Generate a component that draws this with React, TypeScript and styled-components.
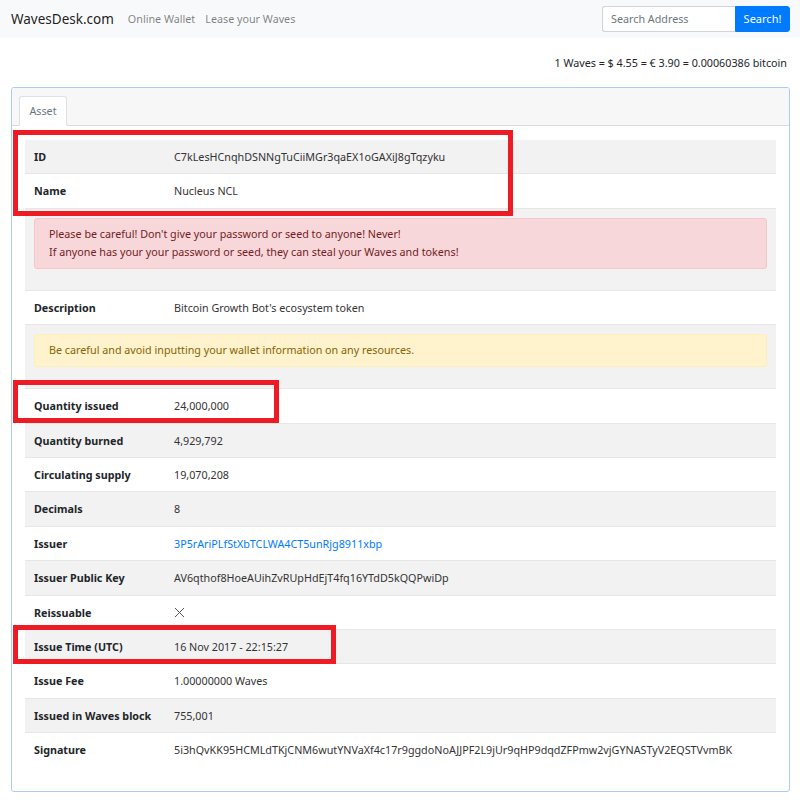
import React from 'react';
import styled, { createGlobalStyle } from 'styled-components';

const GlobalStyle = createGlobalStyle`
  * { box-sizing: border-box; }
  body {
    margin: 0;
    background: #fff;
    font-family: "Noto Sans", "Open Sans", "Liberation Sans", sans-serif;
    font-size: 10.75px;
    line-height: 18px;
    color: #212529;
  }
`;

// asset details shown in the table
interface AssetField {
  label: string;
  value: React.ReactNode;
}

type Row =
  | { kind: 'field'; field: AssetField }
  | { kind: 'alert'; variant: 'danger' | 'warning'; lines: string[] };

const rows: Row[] = [
  { kind: 'field', field: { label: 'ID', value: 'C7kLesHCnqhDSNNgTuCiiMGr3qaEX1oGAXiJ8gTqzyku' } },
  { kind: 'field', field: { label: 'Name', value: 'Nucleus NCL' } },
  {
    kind: 'alert',
    variant: 'danger',
    lines: [
      "Please be careful! Don't give your password or seed to anyone! Never!",
      'If anyone has your your password or seed, they can steal your Waves and tokens!',
    ],
  },
  { kind: 'field', field: { label: 'Description', value: "Bitcoin Growth Bot's ecosystem token" } },
  {
    kind: 'alert',
    variant: 'warning',
    lines: ['Be careful and avoid inputting your wallet information on any resources.'],
  },
  { kind: 'field', field: { label: 'Quantity issued', value: '24,000,000' } },
  { kind: 'field', field: { label: 'Quantity burned', value: '4,929,792' } },
  { kind: 'field', field: { label: 'Circulating supply', value: '19,070,208' } },
  { kind: 'field', field: { label: 'Decimals', value: '8' } },
  { kind: 'field', field: { label: 'Issuer', value: 'link' } },
  { kind: 'field', field: { label: 'Issuer Public Key', value: 'AV6qthof8HoeAUihZvRUpHdEjT4fq16YTdD5kQQPwiDp' } },
  { kind: 'field', field: { label: 'Reissuable', value: 'cross' } },
  { kind: 'field', field: { label: 'Issue Time (UTC)', value: '16 Nov 2017 - 22:15:27' } },
  { kind: 'field', field: { label: 'Issue Fee', value: '1.00000000 Waves' } },
  { kind: 'field', field: { label: 'Issued in Waves block', value: '755,001' } },
  {
    kind: 'field',
    field: {
      label: 'Signature',
      value: '5i3hQvKK95HCMLdTKjCNM6wutYNVaXf4c17r9ggdoNoAJJPF2L9jUr9qHP9dqdZFPmw2vjGYNASTyV2EQSTVvmBK',
    },
  },
];

// highlight frames drawn over the table
const highlights = [
  { left: 13, top: 130, width: 500, height: 86 },
  { left: 13, top: 380, width: 266, height: 43 },
  { left: 13, top: 625, width: 323, height: 39 },
];

const Page = styled.div`
  position: relative;
  padding-bottom: 14px;
`;

const Navbar = styled.nav`
  display: flex;
  align-items: center;
  height: 38px;
  padding: 0 10px 0 11px;
  background: #f8f9fa;
`;

const Brand = styled.a`
  font-size: 13.5px;
  color: rgba(0, 0, 0, 0.9);
  margin-right: 14px;
  text-decoration: none;
  white-space: nowrap;
`;

const NavLink = styled.a`
  font-size: 10.75px;
  color: rgba(0, 0, 0, 0.5);
  margin-right: 10px;
  text-decoration: none;
  white-space: nowrap;
`;

const SearchForm = styled.form`
  display: flex;
  margin-left: auto;
  height: 26px;
`;

const SearchInput = styled.input`
  width: 133px;
  height: 26px;
  padding: 0 8px;
  font: inherit;
  font-size: 10.75px;
  color: #495057;
  border: 1px solid #ced4da;
  border-right: none;
  border-radius: 3px 0 0 3px;
  outline: none;
  &::placeholder { color: #6c757d; }
`;

const SearchButton = styled.button`
  width: 55px;
  height: 26px;
  padding: 0;
  font: inherit;
  font-size: 11px;
  color: #fff;
  background: #007bff;
  border: 1px solid #007bff;
  border-radius: 0 3px 3px 0;
`;

const RateLine = styled.div`
  text-align: right;
  padding: 16px 13px 15px 0;
  font-size: 10.75px;
  line-height: 18px;
`;

const Card = styled.section`
  margin: 0 10px 0 11px;
  border: 1px solid #a9cdf5;
  border-radius: 3px;
  overflow: hidden;
`;

const CardHeader = styled.div`
  height: 38px;
  padding: 8px 7px 0;
  background: #f7f7f7;
  border-bottom: 1px solid #dcdcdc;
  display: flex;
  align-items: flex-end;
`;

const Tab = styled.div`
  height: 30px;
  width: 48px;
  margin-bottom: -1px;
  display: flex;
  align-items: center;
  justify-content: center;
  color: #6c757d;
  background: #fff;
  border: 1px solid #dee2e6;
  border-bottom-color: #fff;
  border-radius: 3px 3px 0 0;
`;

const CardBody = styled.div`
  padding: 14px 13px 25px;
`;

const Table = styled.table`
  width: 100%;
  table-layout: fixed;
  border-collapse: collapse;
  tbody tr:nth-of-type(odd) { background: #f2f2f2; }
`;

const LabelCol = styled.col`
  width: 140px;
`;

const TableRow = styled.tr`
  border-top: 1px solid #e6e6e6;
  &:first-child { border-top: none; }
`;

const LabelCell = styled.th`
  padding: 8px 9px 7.4px;
  text-align: left;
  font-weight: 700;
  white-space: nowrap;
  vertical-align: top;
`;

const ValueCell = styled.td`
  padding: 8px 9px 7.4px;
  color: #333;
  white-space: nowrap;
  vertical-align: top;
`;

const AlertCell = styled.td`
  padding: 9px;
`;

const Alert = styled.div<{ $variant: 'danger' | 'warning' }>`
  margin-bottom: 12px;
  padding: 6px 14px 7px;
  border-radius: 3px;
  border: 1px solid ${(p) => (p.$variant === 'danger' ? '#f5c6cb' : '#ffeeba')};
  background: ${(p) => (p.$variant === 'danger' ? '#f8d7da' : '#fff3cd')};
  color: ${(p) => (p.$variant === 'danger' ? '#721c24' : '#856404')};
`;

const Link = styled.a`
  color: #007bff;
  text-decoration: none;
`;

const Highlight = styled.div`
  position: absolute;
  border: 5px solid #ed1c24;
  pointer-events: none;
`;

const Cross = () => (
  <svg width="11" height="11" viewBox="0 0 11 11" style={{ verticalAlign: '-1px' }}>
    <path d="M1 1L10 10M10 1L1 10" stroke="#555" strokeWidth="1" fill="none" />
  </svg>
);

const renderValue = (field: AssetField) => {
  if (field.value === 'link') {
    return <Link href="#">3P5rAriPLfStXbTCLWA4CT5unRjg8911xbp</Link>;
  }
  if (field.value === 'cross') {
    return <Cross />;
  }
  return field.value;
};

const App: React.FC = () => {
  return (
    <Page>
      <GlobalStyle />
      <Navbar>
        <Brand href="#">WavesDesk.com</Brand>
        <NavLink href="#">Online Wallet</NavLink>
        <NavLink href="#">Lease your Waves</NavLink>
        <SearchForm onSubmit={(e) => e.preventDefault()}>
          <SearchInput placeholder="Search Address" />
          <SearchButton type="submit">Search!</SearchButton>
        </SearchForm>
      </Navbar>

      <RateLine>1 Waves = $ 4.55 = € 3.90 = 0.00060386 bitcoin</RateLine>

      <Card>
        <CardHeader>
          <Tab>Asset</Tab>
        </CardHeader>
        <CardBody>
          <Table>
            <colgroup>
              <LabelCol />
              <col />
            </colgroup>
            <tbody>
              {rows.map((row, i) =>
                row.kind === 'field' ? (
                  <TableRow key={i}>
                    <LabelCell>{row.field.label}</LabelCell>
                    <ValueCell>{renderValue(row.field)}</ValueCell>
                  </TableRow>
                ) : (
                  <TableRow key={i}>
                    <AlertCell colSpan={2}>
                      <Alert $variant={row.variant}>
                        {row.lines.map((line) => (
                          <div key={line}>{line}</div>
                        ))}
                      </Alert>
                    </AlertCell>
                  </TableRow>
                )
              )}
            </tbody>
          </Table>
        </CardBody>
      </Card>

      {highlights.map((h, i) => (
        <Highlight
          key={i}
          style={{ left: h.left, top: h.top, width: h.width, height: h.height }}
        />
      ))}
    </Page>
  );
};

export default App;
